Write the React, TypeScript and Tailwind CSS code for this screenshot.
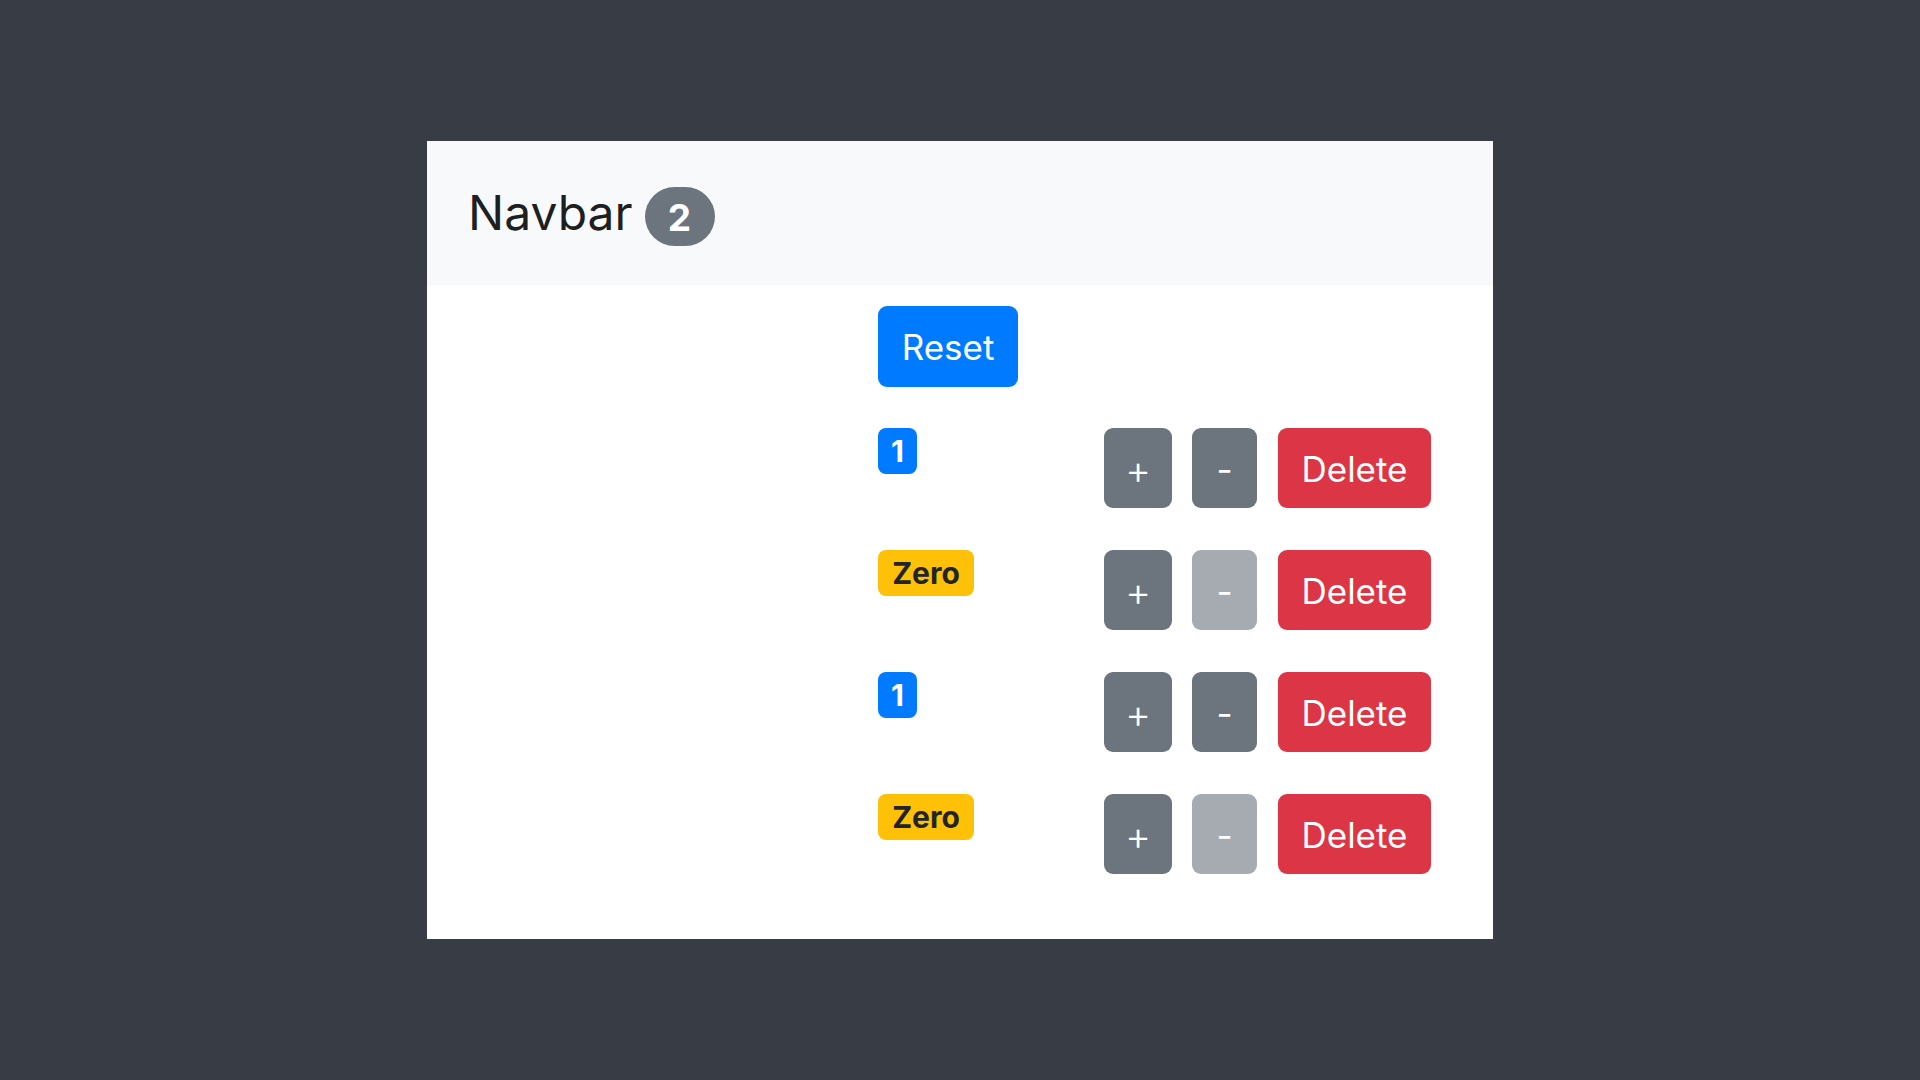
import { useState } from "react";

type Counter = { id: number; value: number };

const initial: Counter[] = [
  { id: 1, value: 1 },
  { id: 2, value: 0 },
  { id: 3, value: 1 },
  { id: 4, value: 0 },
];

function CounterRow({
  counter,
  onIncrement,
  onDecrement,
  onDelete,
}: {
  counter: Counter;
  onIncrement: () => void;
  onDecrement: () => void;
  onDelete: () => void;
}) {
  const zero = counter.value === 0;

  return (
    <div className="flex items-start">
      <div className="w-[226px]">
        {zero ? (
          <span className="inline-flex h-[46px] w-[96px] items-center justify-center rounded-[8px] bg-[#ffc107] text-[30px] font-bold leading-none text-[#212529]">
            Zero
          </span>
        ) : (
          <span className="inline-flex h-[46px] min-w-[39px] items-center justify-center rounded-[8px] bg-[#007bff] px-[10px] text-[30px] font-bold leading-none text-white">
            {counter.value}
          </span>
        )}
      </div>
      <div className="flex items-start gap-[20px]">
        <button
          onClick={onIncrement}
          className="flex h-[80px] w-[68px] items-center justify-center rounded-[9px] bg-[#6c757d] pt-[4px] text-[40px] font-light leading-none text-white"
        >
          +
        </button>
        <button
          onClick={onDecrement}
          disabled={zero}
          className={
            zero
              ? "flex h-[80px] w-[65px] items-center justify-center rounded-[9px] bg-[#a5abb0] pt-[2px] text-[35px] leading-none text-white"
              : "flex h-[80px] w-[65px] items-center justify-center rounded-[9px] bg-[#6c757d] pt-[2px] text-[35px] leading-none text-white"
          }
        >
          -
        </button>
        <button
          onClick={onDelete}
          className="ml-px flex h-[80px] w-[153px] items-center justify-center rounded-[9px] bg-[#dc3545] pt-[2px] text-[35px] leading-none text-white"
        >
          Delete
        </button>
      </div>
    </div>
  );
}

export default function App() {
  const [counters, setCounters] = useState<Counter[]>(initial);
  const nonZero = counters.filter((c) => c.value > 0).length;

  const update = (id: number, delta: number) =>
    setCounters((cs) =>
      cs.map((c) => (c.id === id ? { ...c, value: Math.max(0, c.value + delta) } : c))
    );

  return (
    <div className="flex min-h-screen items-center justify-center bg-[#383c45] font-['Inter','Roboto',sans-serif]">
      <div className="h-[798px] w-[1066px] bg-white">
        {/* Navbar */}
        <nav className="flex h-[144px] items-center bg-[#f8f9fa] pl-[41px]">
          <span className="text-[48px] leading-none text-black/90">Navbar</span>
          <span className="ml-[12px] mt-[6px] inline-flex h-[59px] w-[70px] items-center justify-center rounded-full bg-[#6c757d] pt-[2px] text-[37px] font-bold leading-none text-white">
            {nonZero}
          </span>
        </nav>

        {/* Counters */}
        <main className="pl-[451px] pt-[21px]">
          <button
            onClick={() => setCounters((cs) => cs.map((c) => ({ ...c, value: 0 })))}
            className="flex h-[81px] w-[140px] items-center justify-center rounded-[9px] bg-[#007bff] pt-[2px] text-[35px] leading-none text-white"
          >
            Reset
          </button>
          <div className="mt-[41px] flex flex-col gap-[42px]">
            {counters.map((c) => (
              <CounterRow
                key={c.id}
                counter={c}
                onIncrement={() => update(c.id, 1)}
                onDecrement={() => update(c.id, -1)}
                onDelete={() => setCounters((cs) => cs.filter((x) => x.id !== c.id))}
              />
            ))}
          </div>
        </main>
      </div>
    </div>
  );
}
